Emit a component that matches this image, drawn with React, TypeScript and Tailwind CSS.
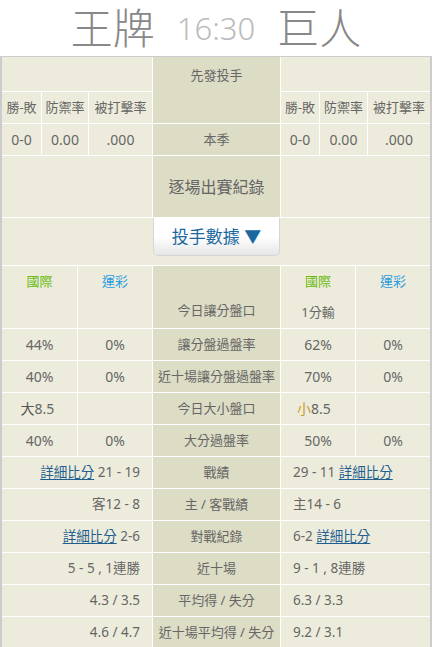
import React from 'react';

const side = 'bg-[#edecdc]';
const mid = 'bg-[#dddcc5]';

function Link({ children }: { children: React.ReactNode }) {
  return <span className="text-[#1f5f8f] underline underline-offset-2">{children}</span>;
}

function OddsRow({ l1, l2, c, r1, r2 }: { l1: React.ReactNode; l2: React.ReactNode; c: string; r1: React.ReactNode; r2: React.ReactNode }) {
  return (
    <div className="flex h-[31px] gap-px">
      <div className={`${side} w-[75px] flex items-center justify-center text-[14px]`}>{l1}</div>
      <div className={`${side} w-[74px] flex items-center justify-center text-[14px]`}>{l2}</div>
      <div className={`${mid} w-[127px] flex items-center justify-center`}>{c}</div>
      <div className={`${side} w-[74px] flex items-center justify-center text-[14px]`}>{r1}</div>
      <div className={`${side} w-[74px] flex items-center justify-center text-[14px]`}>{r2}</div>
    </div>
  );
}

function RecordRow({ left, c, right }: { left: React.ReactNode; c: string; right: React.ReactNode }) {
  return (
    <div className="flex h-[31px] gap-px">
      <div className={`${side} w-[150px] flex items-center justify-end pr-3 text-[13.5px]`}>{left}</div>
      <div className={`${mid} w-[127px] flex items-center justify-center`}>{c}</div>
      <div className={`${side} w-[149px] flex items-center pl-3 text-[13.5px]`}>{right}</div>
    </div>
  );
}

export default function App() {
  const records = [
    { left: <><Link>詳細比分</Link>&nbsp;21 - 19</>, c: '戰績', right: <>29 - 11&nbsp;<Link>詳細比分</Link></> },
    { left: '客12 - 8', c: '主 / 客戰績', right: '主14 - 6' },
    { left: <><Link>詳細比分</Link>&nbsp;2-6</>, c: '對戰紀錄', right: <>6-2&nbsp;<Link>詳細比分</Link></> },
    { left: '5 - 5 , 1連勝', c: '近十場', right: '9 - 1 , 8連勝' },
    { left: '4.3 / 3.5', c: '平均得 / 失分', right: '6.3 / 3.3' },
    { left: '4.6 / 4.7', c: '近十場平均得 / 失分', right: '9.2 / 3.1' },
  ];

  return (
    <div
      className="w-[432px] bg-white text-[13px] text-[#666]"
      style={{ fontFamily: '"Noto Sans", "Noto Sans CJK TC", sans-serif' }}
    >
      {/* Title */}
      <div className="h-[56px] flex items-center justify-center gap-[22px]">
        <span className="text-[42px] font-light text-[#888] leading-[56px]">王牌</span>
        <span className="text-[31px] font-light text-[#bbb] leading-[56px]">16:30</span>
        <span className="text-[42px] font-light text-[#888] leading-[56px]">巨人</span>
      </div>

      <div className="border-x-2 border-y border-[#cccccc] bg-white flex flex-col gap-px">
        {/* Starting pitchers */}
        <div className="flex gap-px">
          <div className="w-[150px] flex flex-col gap-px">
            <div className={`${side} h-[34px]`} />
            <div className="flex gap-px h-[31px]">
              <div className={`${side} w-[39px] flex items-center justify-center`}>勝-敗</div>
              <div className={`${side} w-[46px] flex items-center justify-center`}>防禦率</div>
              <div className={`${side} w-[63px] flex items-center justify-center`}>被打擊率</div>
            </div>
          </div>
          <div className={`${mid} w-[127px] h-[66px] flex justify-center pt-[9px]`}>先發投手</div>
          <div className="w-[149px] flex flex-col gap-px">
            <div className={`${side} h-[34px]`} />
            <div className="flex gap-px h-[31px]">
              <div className={`${side} w-[38px] flex items-center justify-center`}>勝-敗</div>
              <div className={`${side} w-[47px] flex items-center justify-center`}>防禦率</div>
              <div className={`${side} w-[62px] flex items-center justify-center`}>被打擊率</div>
            </div>
          </div>
        </div>
        <div className="flex gap-px h-[31px] text-[14px]">
          <div className={`${side} w-[39px] flex items-center justify-center`}>0-0</div>
          <div className={`${side} w-[46px] flex items-center justify-center`}>0.00</div>
          <div className={`${side} w-[63px] flex items-center justify-center`}>.000</div>
          <div className={`${mid} w-[127px] flex items-center justify-center text-[13px]`}>本季</div>
          <div className={`${side} w-[38px] flex items-center justify-center`}>0-0</div>
          <div className={`${side} w-[47px] flex items-center justify-center`}>0.00</div>
          <div className={`${side} w-[62px] flex items-center justify-center`}>.000</div>
        </div>
        <div className="flex gap-px h-[61px]">
          <div className={`${side} w-[150px]`} />
          <div className={`${mid} w-[127px] flex items-center justify-center text-[16px]`}>逐場出賽紀錄</div>
          <div className={`${side} w-[149px]`} />
        </div>
        <div className={`${side} flex h-[47px]`}>
          <div className="w-[151px]" />
          <div className="w-[127px] h-[38px] bg-gradient-to-b from-white from-50% to-[#e6e6e6] border-x border-b border-[#d6d6d6] rounded-b-[5px] flex items-center justify-center text-[17px] text-[#1a679f]">
            投手數據 ▼
          </div>
        </div>

        {/* Odds */}
        <div className="flex gap-px h-[62px]">
          <div className={`${side} w-[75px] flex flex-col`}>
            <div className="h-[31px] flex items-center justify-center text-[#6aba10]">國際</div>
          </div>
          <div className={`${side} w-[74px] flex flex-col`}>
            <div className="h-[31px] flex items-center justify-center text-[#2a9be0]">運彩</div>
          </div>
          <div className={`${mid} w-[127px] flex items-end justify-center pb-[8px]`}>今日讓分盤口</div>
          <div className={`${side} w-[74px] flex flex-col`}>
            <div className="h-[31px] flex items-center justify-center text-[#6aba10]">國際</div>
            <div className="h-[31px] flex items-center justify-center">1分輸</div>
          </div>
          <div className={`${side} w-[74px] flex flex-col`}>
            <div className="h-[31px] flex items-center justify-center text-[#2a9be0]">運彩</div>
          </div>
        </div>
        <OddsRow l1="44%" l2="0%" c="讓分盤過盤率" r1="62%" r2="0%" />
        <OddsRow l1="40%" l2="0%" c="近十場讓分盤過盤率" r1="70%" r2="0%" />
        <OddsRow
          l1={<span className="-ml-1"><span className="text-[#555]">大</span>8.5</span>}
          l2=""
          c="今日大小盤口"
          r1={<span className="-ml-2"><span className="text-[#c99a2e]">小</span>8.5</span>}
          r2=""
        />
        <OddsRow l1="40%" l2="0%" c="大分過盤率" r1="50%" r2="0%" />

        {/* Records */}
        {records.map((r, i) => (
          <RecordRow key={i} left={r.left} c={r.c} right={r.right} />
        ))}
      </div>
    </div>
  );
}
